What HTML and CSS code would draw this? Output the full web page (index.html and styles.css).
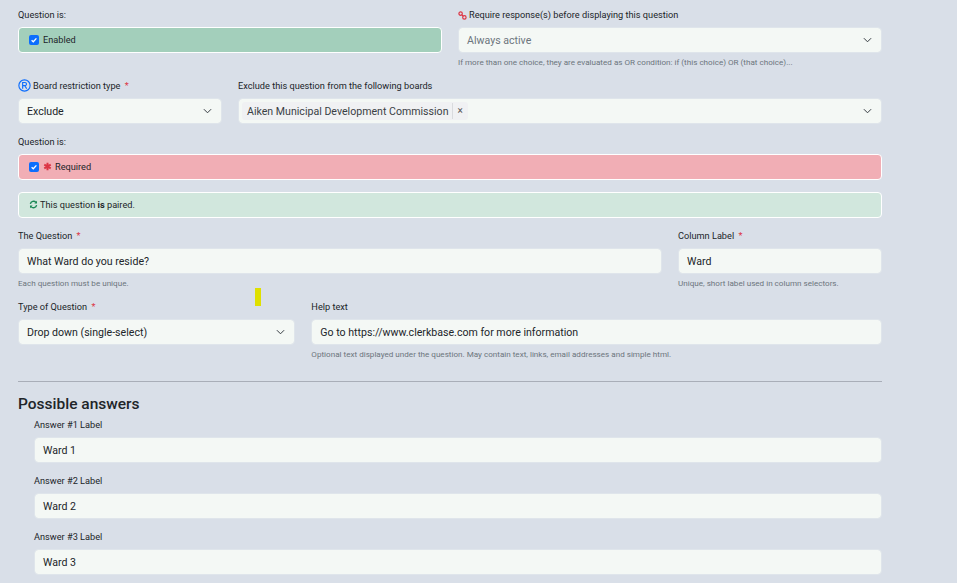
FILE: index.html
```html
<!DOCTYPE html>
<html lang="en">
<head>
  <meta charset="UTF-8" />
  <meta name="viewport" content="width=device-width, initial-scale=1" />
  <title>Edit question</title>
  <link rel="stylesheet" href="styles.css">
</head>
<body>
  <form class="page">
    <div class="row">
      <div class="field span-6">
        <label class="field-label">Question is:</label>
        <div class="check-box box-enabled">
          <span class="check"><svg viewBox="0 0 10 10"><path d="M2.6 5.2 4.3 6.8 7.4 3.4" /></svg></span>
          <span>Enabled</span>
        </div>
      </div>
      <div class="field span-6">
        <label class="field-label"><svg class="icon icon-link" viewBox="0 0 10 10"><circle cx="2.9" cy="2.9" r="1.9" /><circle cx="7.1" cy="7.1" r="1.9" /><path d="M4.2 4.2 5.8 5.8" /></svg>Require response(s) before displaying this question</label>
        <div class="control control-select muted">Always active<svg class="chevron" viewBox="0 0 10 6"><path d="M1 1 5 5 9 1" /></svg></div>
        <p class="help">If more than one choice, they are evaluated as OR condition: if (this choice) OR (that choice)...</p>
      </div>
    </div>

    <div class="row">
      <div class="field span-3">
        <label class="field-label"><svg class="icon icon-reg" viewBox="0 0 12 12"><circle cx="6" cy="6" r="5.2" /><path d="M4.3 9V3.2H6.4C8.3 3.2 8.3 6.1 6.4 6.1H4.3M6.3 6.1 8 9" /></svg>Board restriction type <span class="req">*</span></label>
        <div class="control control-select">Exclude<svg class="chevron" viewBox="0 0 10 6"><path d="M1 1 5 5 9 1" /></svg></div>
      </div>
      <div class="field span-9">
        <label class="field-label">Exclude this question from the following boards</label>
        <div class="control control-select control-tags">
          <span class="tag"><span class="tag-text">Aiken Municipal Development Commission</span><span class="tag-x">×</span></span>
          <svg class="chevron" viewBox="0 0 10 6"><path d="M1 1 5 5 9 1" /></svg>
        </div>
      </div>
    </div>

    <div class="row">
      <div class="field span-12">
        <label class="field-label">Question is:</label>
        <div class="check-box box-required">
          <span class="check"><svg viewBox="0 0 10 10"><path d="M2.6 5.2 4.3 6.8 7.4 3.4" /></svg></span>
          <svg class="icon icon-star" viewBox="0 0 10 10"><path d="M5 .8V9.2M1.4 2.9 8.6 7.1M8.6 2.9 1.4 7.1" /></svg>
          <span>Required</span>
        </div>
      </div>
    </div>

    <div class="paired">
      <svg class="icon icon-sync" viewBox="0 0 10 10"><path d="M1.5 4.2A3.6 3.6 0 0 1 7.7 2.6M8.5 5.8A3.6 3.6 0 0 1 2.3 7.4" /><path class="fill" d="M8.9 .8V3.8H5.9Z M1.1 9.2V6.2H4.1Z" /></svg>
      <span>This question <b>is</b> paired.</span>
    </div>

    <div class="row">
      <div class="field span-9">
        <label class="field-label">The Question <span class="req">*</span></label>
        <div class="control">What Ward do you reside?</div>
        <p class="help">Each question must be unique.</p>
      </div>
      <div class="field span-3">
        <label class="field-label">Column Label <span class="req">*</span></label>
        <div class="control">Ward</div>
        <p class="help">Unique, short label used in column selectors.</p>
      </div>
    </div>

    <div class="row">
      <div class="field span-4">
        <label class="field-label">Type of Question <span class="req">*</span></label>
        <div class="control control-select">Drop down (single-select)<svg class="chevron" viewBox="0 0 10 6"><path d="M1 1 5 5 9 1" /></svg></div>
      </div>
      <div class="field span-8">
        <label class="field-label">Help text</label>
        <div class="control">Go to https://www.clerkbase.com for more information</div>
        <p class="help">Optional text displayed under the question. May contain text, links, email addresses and simple html.</p>
      </div>
    </div>

    <hr class="divider" />

    <h2 class="section-title">Possible answers</h2>
    <div class="answers">
      <div class="answer">
        <label class="field-label">Answer #1 Label</label>
        <div class="control">Ward 1</div>
      </div>
      <div class="answer">
        <label class="field-label">Answer #2 Label</label>
        <div class="control">Ward 2</div>
      </div>
      <div class="answer">
        <label class="field-label">Answer #3 Label</label>
        <div class="control">Ward 3</div>
      </div>
    </div>
  </form>

  <!-- highlighter mark sitting over the form -->
  <div class="marker"></div>
</body>
</html>
```

FILE: styles.css
```css
* {
  box-sizing: border-box;
}

html, body {
  margin: 0;
  padding: 0;
  height: 100%;
  overflow: hidden;
}

body {
  position: relative;
  background-color: #d9dfe8;
  color: #212529;
  font-family: Roboto, Arial, sans-serif;
  font-size: 10.5px;
}

.page {
  width: 864px;
  margin-left: 18px;
  padding-top: 8px;
}

/* 12 column grid, 16px gutter */
.row {
  display: grid;
  grid-template-columns: repeat(12, 1fr);
  column-gap: 16px;
  margin-bottom: 11px;
}

.span-3 { grid-column: span 3; }
.span-4 { grid-column: span 4; }
.span-6 { grid-column: span 6; }
.span-8 { grid-column: span 8; }
.span-9 { grid-column: span 9; }
.span-12 { grid-column: span 12; }

.field-label {
  display: block;
  height: 14px;
  line-height: 13px;
  margin-bottom: 5px;
  font-size: 9.2px;
}

.req {
  color: #dc3545;
  margin-left: 2px;
}

.control {
  position: relative;
  display: flex;
  align-items: center;
  height: 26px;
  padding: 0 8px;
  background-color: #f4f8f5;
  background-clip: padding-box;
  border: 1px solid #dfe5eb;
  border-radius: 4px;
  font-size: 10.6px;
}

.muted {
  color: #6c757d;
}

.chevron {
  position: absolute;
  right: 9px;
  top: 9px;
  width: 9px;
  height: 6px;
  fill: none;
  stroke: #343a40;
  stroke-width: 1.1;
}

.control-tags {
  padding-left: 3px;
}

.tag {
  display: flex;
  align-items: center;
  height: 18px;
  background-color: #f0f1f3;
  border-radius: 3px;
}

.tag-text {
  padding: 0 3px 0 5px;
  color: #3a3f45;
}

.tag-x {
  padding: 0 5px;
  border-left: 1px solid #d9dbde;
  color: #555;
  font-size: 10px;
  line-height: 16px;
}

.help {
  margin: 4px 0 0;
  height: 11px;
  line-height: 10px;
  font-size: 8.1px;
  color: #6c757d;
}

.check-box,
.paired {
  display: flex;
  align-items: center;
  height: 26px;
  padding-bottom: 1px;
  border: 1px solid #fff;
  border-radius: 4px;
  font-size: 9.2px;
}

.check-box {
  padding-left: 10px;
}

.box-enabled {
  background-color: #a3cfbb;
}

.box-required {
  background-color: #f1aeb5;
}

.paired {
  margin-top: 12px;
  margin-bottom: 11px;
  padding-left: 10px;
  background-color: #d1e7dd;
}

.check {
  width: 10px;
  height: 10px;
  margin-right: 4px;
  background-color: #0d6efd;
  border-radius: 2px;
}

.check svg {
  display: block;
  fill: none;
  stroke: #fff;
  stroke-width: 1.3;
}

.icon {
  flex: none;
  fill: none;
}

.field-label .icon {
  display: inline-block;
  vertical-align: -2px;
}

.icon-link {
  width: 9px;
  height: 9px;
  margin-right: 2px;
  stroke: #dc3545;
  stroke-width: 1.3;
}

.icon-reg {
  width: 13px;
  height: 13px;
  margin-right: 2px;
  stroke: #0d6efd;
  stroke-width: 1.05;
}

.field-label .icon-reg {
  vertical-align: -3px;
}

.icon-star {
  width: 9px;
  height: 9px;
  margin-right: 3px;
  stroke: #dc3545;
  stroke-width: 2.2;
}

.icon-sync {
  width: 9px;
  height: 9px;
  margin-right: 2px;
  stroke: #198754;
  stroke-width: 1.5;
}

.icon-sync .fill {
  fill: #198754;
  stroke: none;
}

.divider {
  height: 1px;
  margin: 21px 0 0;
  border: 0;
  background-color: #a9aeb8;
}

.section-title {
  margin: 12px 0 0;
  height: 20px;
  line-height: 20px;
  font-size: 15.5px;
  font-weight: 500;
}

.answers {
  margin-top: 4px;
  padding-left: 16px;
}

.answer {
  margin-bottom: 11px;
}

.marker {
  position: absolute;
  left: 255px;
  top: 288px;
  width: 6px;
  height: 18px;
  background-color: #dfe000;
}
```
